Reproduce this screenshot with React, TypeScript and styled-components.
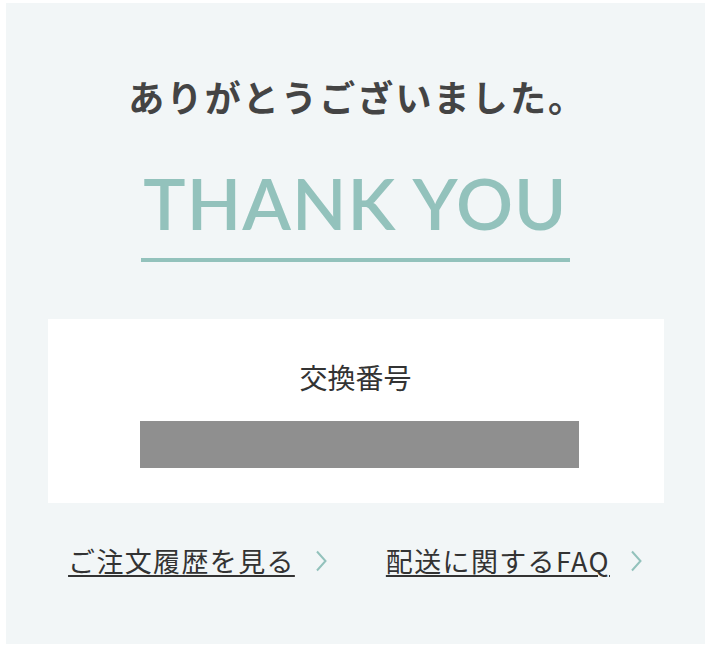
import React from 'react'
import styled, { createGlobalStyle } from 'styled-components'

const GlobalStyle = createGlobalStyle`
  html, body {
    margin: 0;
    padding: 0;
    background: #fff;
  }
  body {
    font-family: "Noto Sans CJK JP", "Noto Sans", sans-serif;
    color: #333;
  }
`

const Page = styled.div`
  padding: 3px 7px 6px 6px;
`

const Panel = styled.section`
  background: #f2f6f7;
  height: 641px;
  display: flex;
  flex-direction: column;
  align-items: center;
  box-sizing: border-box;
  padding-top: 71px;
`

const Heading = styled.h1`
  margin: 0;
  font-size: 36px;
  font-weight: 700;
  line-height: 44px;
  color: #444;
  letter-spacing: 0.06em;
  padding-left: 0.1em;
`

const ThankYou = styled.div`
  margin-top: 41px;
  font-family: Lato, "Noto Sans", sans-serif;
  font-size: 71px;
  font-weight: 600;
  line-height: 88px;
  color: #93c2bc;
  letter-spacing: 0.015em;
  padding: 0 2px 11px;
  border-bottom: 4px solid #93c2bc;
`

const NumberCard = styled.div`
  margin-top: 57px;
  width: 616px;
  height: 184px;
  background: #fff;
  display: flex;
  flex-direction: column;
  align-items: center;
  box-sizing: border-box;
  padding-top: 40px;
`

const NumberLabel = styled.div`
  font-size: 28px;
  line-height: 36px;
  color: #333;
`

const NumberMask = styled.div`
  margin-top: 26px;
  margin-left: 8px;
  width: 439px;
  height: 47px;
  background: #8f8f8f;
`

const LinkRow = styled.nav`
  margin-top: 40px;
  display: flex;
  gap: 58px;
  align-items: center;
`

const LinkItem = styled.a`
  display: flex;
  align-items: center;
  gap: 19px;
  text-decoration: none;
  color: #333;
`

const LinkText = styled.span`
  font-size: 27px;
  line-height: 36px;
  text-decoration: underline;
  text-decoration-thickness: 2px;
  text-underline-offset: 3px;
  letter-spacing: 0.05em;
`

const Chevron = () => (
  <svg width="14" height="24" viewBox="0 0 14 24" fill="none">
    <path d="M3 2.5 L11.5 12 L3 21.5" stroke="#93c2bc" strokeWidth="2" />
  </svg>
)

export default function App() {
  return (
    <>
      <GlobalStyle />
      <Page>
        <Panel>
          <Heading>ありがとうございました。</Heading>
          <ThankYou>THANK YOU</ThankYou>
          <NumberCard>
            <NumberLabel>交換番号</NumberLabel>
            <NumberMask />
          </NumberCard>
          <LinkRow>
            <LinkItem href="#">
              <LinkText>ご注文履歴を見る</LinkText>
              <Chevron />
            </LinkItem>
            <LinkItem href="#">
              <LinkText>配送に関するFAQ</LinkText>
              <Chevron />
            </LinkItem>
          </LinkRow>
        </Panel>
      </Page>
    </>
  )
}
